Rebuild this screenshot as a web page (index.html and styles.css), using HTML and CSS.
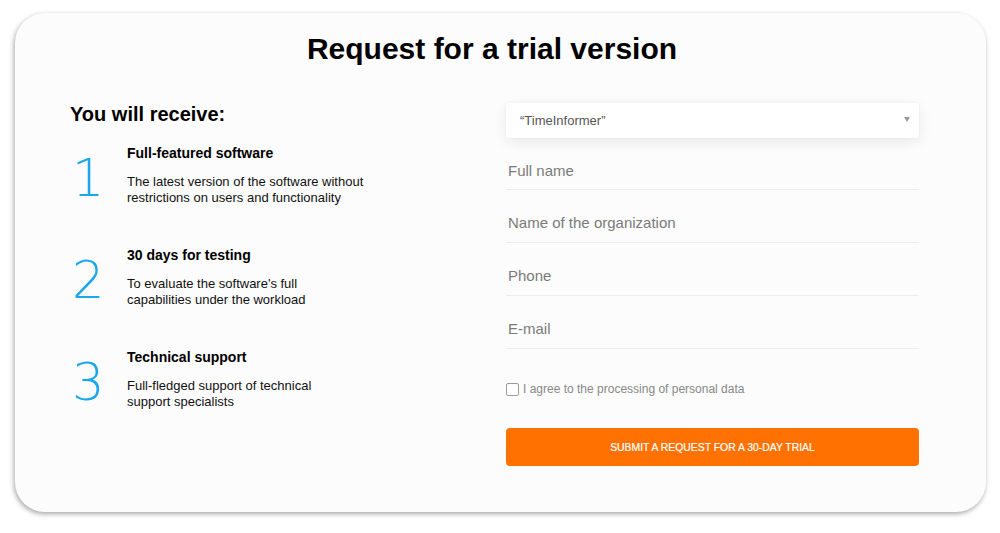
FILE: index.html
```html
<!DOCTYPE html>
<html lang="en">
<head>
<meta charset="utf-8">
<title>Request for a trial version</title>
<link rel="stylesheet" href="styles.css">
</head>
<body>
<div class="card">
  <h1 class="title">Request for a trial version</h1>
  <div class="content">
    <div class="benefits">
      <h2 class="benefits-title">You will receive:</h2>
      <div class="item">
        <div class="num">1</div>
        <div class="item-body">
          <h3 class="item-title">Full-featured software</h3>
          <p class="item-text">The latest version of the software without<br>restrictions on users and functionality</p>
        </div>
      </div>
      <div class="item">
        <div class="num">2</div>
        <div class="item-body">
          <h3 class="item-title">30 days for testing</h3>
          <p class="item-text">To evaluate the software's full<br>capabilities under the workload</p>
        </div>
      </div>
      <div class="item">
        <div class="num">3</div>
        <div class="item-body">
          <h3 class="item-title">Technical support</h3>
          <p class="item-text">Full-fledged support of technical<br>support specialists</p>
        </div>
      </div>
    </div>
    <form class="form">
      <div class="select">
        <span class="select-value">“TimeInformer”</span>
        <span class="select-arrow"></span>
      </div>
      <div class="field field-first">Full name</div>
      <div class="field">Name of the organization</div>
      <div class="field">Phone</div>
      <div class="field">E-mail</div>
      <label class="agree"><span class="check"></span><span class="agree-text">I agree to the processing of personal data</span></label>
      <div class="submit">SUBMIT A REQUEST FOR A 30-DAY TRIAL</div>
    </form>
  </div>
</div>
</body>
</html>
```

FILE: styles.css
```css
html, body {
  margin: 0;
  padding: 0;
  background: #ffffff;
}
body {
  padding: 13px 14px 21px 15px;
  font-family: "Liberation Sans", Arial, sans-serif;
  color: #111;
}
.card {
  height: 499px;
  box-sizing: border-box;
  background: #fcfcfc;
  border-radius: 30px;
  box-shadow: -1px 2px 5px rgba(0, 0, 0, 0.35);
  padding: 19px 67px 0 55px;
}
.title {
  margin: 0;
  font-size: 30px;
  line-height: 34px;
  font-weight: bold;
  text-align: center;
  color: #000;
  padding-right: 5px;
}
.content {
  display: flex;
  justify-content: space-between;
  margin-top: 36px;
}
.benefits {
  width: 320px;
}
.benefits-title {
  margin: 0 0 18px;
  font-size: 20px;
  line-height: 24px;
  font-weight: bold;
  color: #000;
}
.item {
  display: flex;
  height: 102px;
}
.num {
  width: 57px;
  flex: none;
  box-sizing: border-box;
  padding-left: 2px;
  margin-top: 10px;
  font-family: "DejaVu Sans", sans-serif;
  font-weight: 200;
  font-size: 51px;
  line-height: 50px;
  height: 50px;
  color: #1aa7ec;
}
.item-title {
  margin: 0;
  font-size: 14px;
  line-height: 18px;
  font-weight: bold;
  color: #000;
}
.item-text {
  margin: 12px 0 0;
  font-size: 13px;
  line-height: 16px;
  color: #111;
  white-space: nowrap;
}
.form {
  width: 413px;
  margin: 1px 0 0;
  display: flex;
  flex-direction: column;
}
.select {
  height: 35px;
  background: #ffffff;
  border-radius: 3px;
  box-shadow: 0 4px 14px rgba(0, 0, 0, 0.08), 0 0 2px rgba(0, 0, 0, 0.05);
  display: flex;
  align-items: center;
  justify-content: space-between;
  padding: 0 9px 0 14px;
}
.select-value {
  font-size: 13px;
  color: #555;
}
.select-arrow {
  width: 0;
  height: 0;
  border-left: 3px solid transparent;
  border-right: 3px solid transparent;
  border-top: 5px solid #9a9a9a;
  margin-top: -2px;
}
.field {
  height: 53px;
  box-sizing: border-box;
  border-bottom: 1px solid #ececec;
  font-size: 15px;
  line-height: 18px;
  color: #7a7a7a;
  padding: 24px 0 0 2px;
}
.field-first {
  height: 52px;
  padding-top: 24px;
}
.agree {
  display: flex;
  align-items: center;
  margin-top: 33px;
  height: 14px;
}
.check {
  width: 11px;
  height: 11px;
  border: 1px solid #9c9c9c;
  border-radius: 2px;
  background: #fff;
  flex: none;
}
.agree-text {
  font-size: 12px;
  color: #888;
  margin-left: 4px;
}
.submit {
  margin-top: 32px;
  height: 38px;
  border-radius: 4px;
  background: #ff7100;
  color: #fff;
  font-size: 10.4px;
  display: flex;
  align-items: center;
  justify-content: center;
  -webkit-text-stroke: 0.2px #fff;
}
```
